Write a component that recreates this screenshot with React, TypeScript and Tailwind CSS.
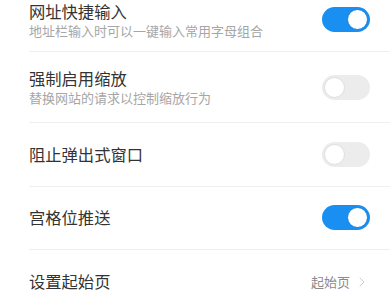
import { ChevronRight } from "lucide-react";

type Row = {
  title: string;
  desc?: string;
  toggle?: boolean;
  value?: string;
};

const rows: Row[] = [
  { title: "网址快捷输入", desc: "地址栏输入时可以一键输入常用字母组合", toggle: true },
  { title: "强制启用缩放", desc: "替换网站的请求以控制缩放行为", toggle: false },
  { title: "阻止弹出式窗口", toggle: false },
  { title: "宫格位推送", toggle: true },
  { title: "设置起始页", value: "起始页" },
];

function Toggle({ on }: { on: boolean }) {
  return (
    <div
      className={`flex h-[25px] w-[48px] items-center rounded-full p-[2px] ${
        on ? "justify-end bg-[#1a8ff2]" : "justify-start bg-[#ececec]"
      }`}
    >
      <div
        className={`h-[21px] w-[21px] rounded-full bg-white ${
          on ? "border border-[#1a7fd8]" : "border border-[#dedede]"
        }`}
      />
    </div>
  );
}

export default function App() {
  return (
    <div
      className="h-[305px] w-[390px] overflow-hidden bg-white"
      style={{ fontFamily: '"Noto Sans CJK SC", "Noto Sans", sans-serif' }}
    >
      {/* list is scrolled a little, first row's top is out of view */}
      <div className="mt-[-12px] pl-[29px]">
        {rows.map((r, i) => (
          <div
            key={r.title}
            className={`flex items-center pr-[20px] ${
              i === 0 ? "h-[64px]" : r.desc ? "h-[71px]" : "h-[63.5px]"
            } ${i < rows.length - 1 ? "border-b border-[#efefef]" : ""}`}
          >
            <div className="flex flex-1 flex-col">
              <div className="text-[16.3px] leading-[21px] text-[#333333]">{r.title}</div>
              {r.desc && (
                <div className="text-[13px] leading-[17px] text-[#a6a6a6]">{r.desc}</div>
              )}
            </div>
            {r.toggle !== undefined && <Toggle on={r.toggle} />}
            {r.value && (
              <div className="flex items-center text-[13px] text-[#8a8a8a]">
                <span>{r.value}</span>
                <ChevronRight className="ml-[4px] h-[16px] w-[16px] text-[#cccccc]" strokeWidth={1.5} />
              </div>
            )}
          </div>
        ))}
      </div>
    </div>
  );
}
